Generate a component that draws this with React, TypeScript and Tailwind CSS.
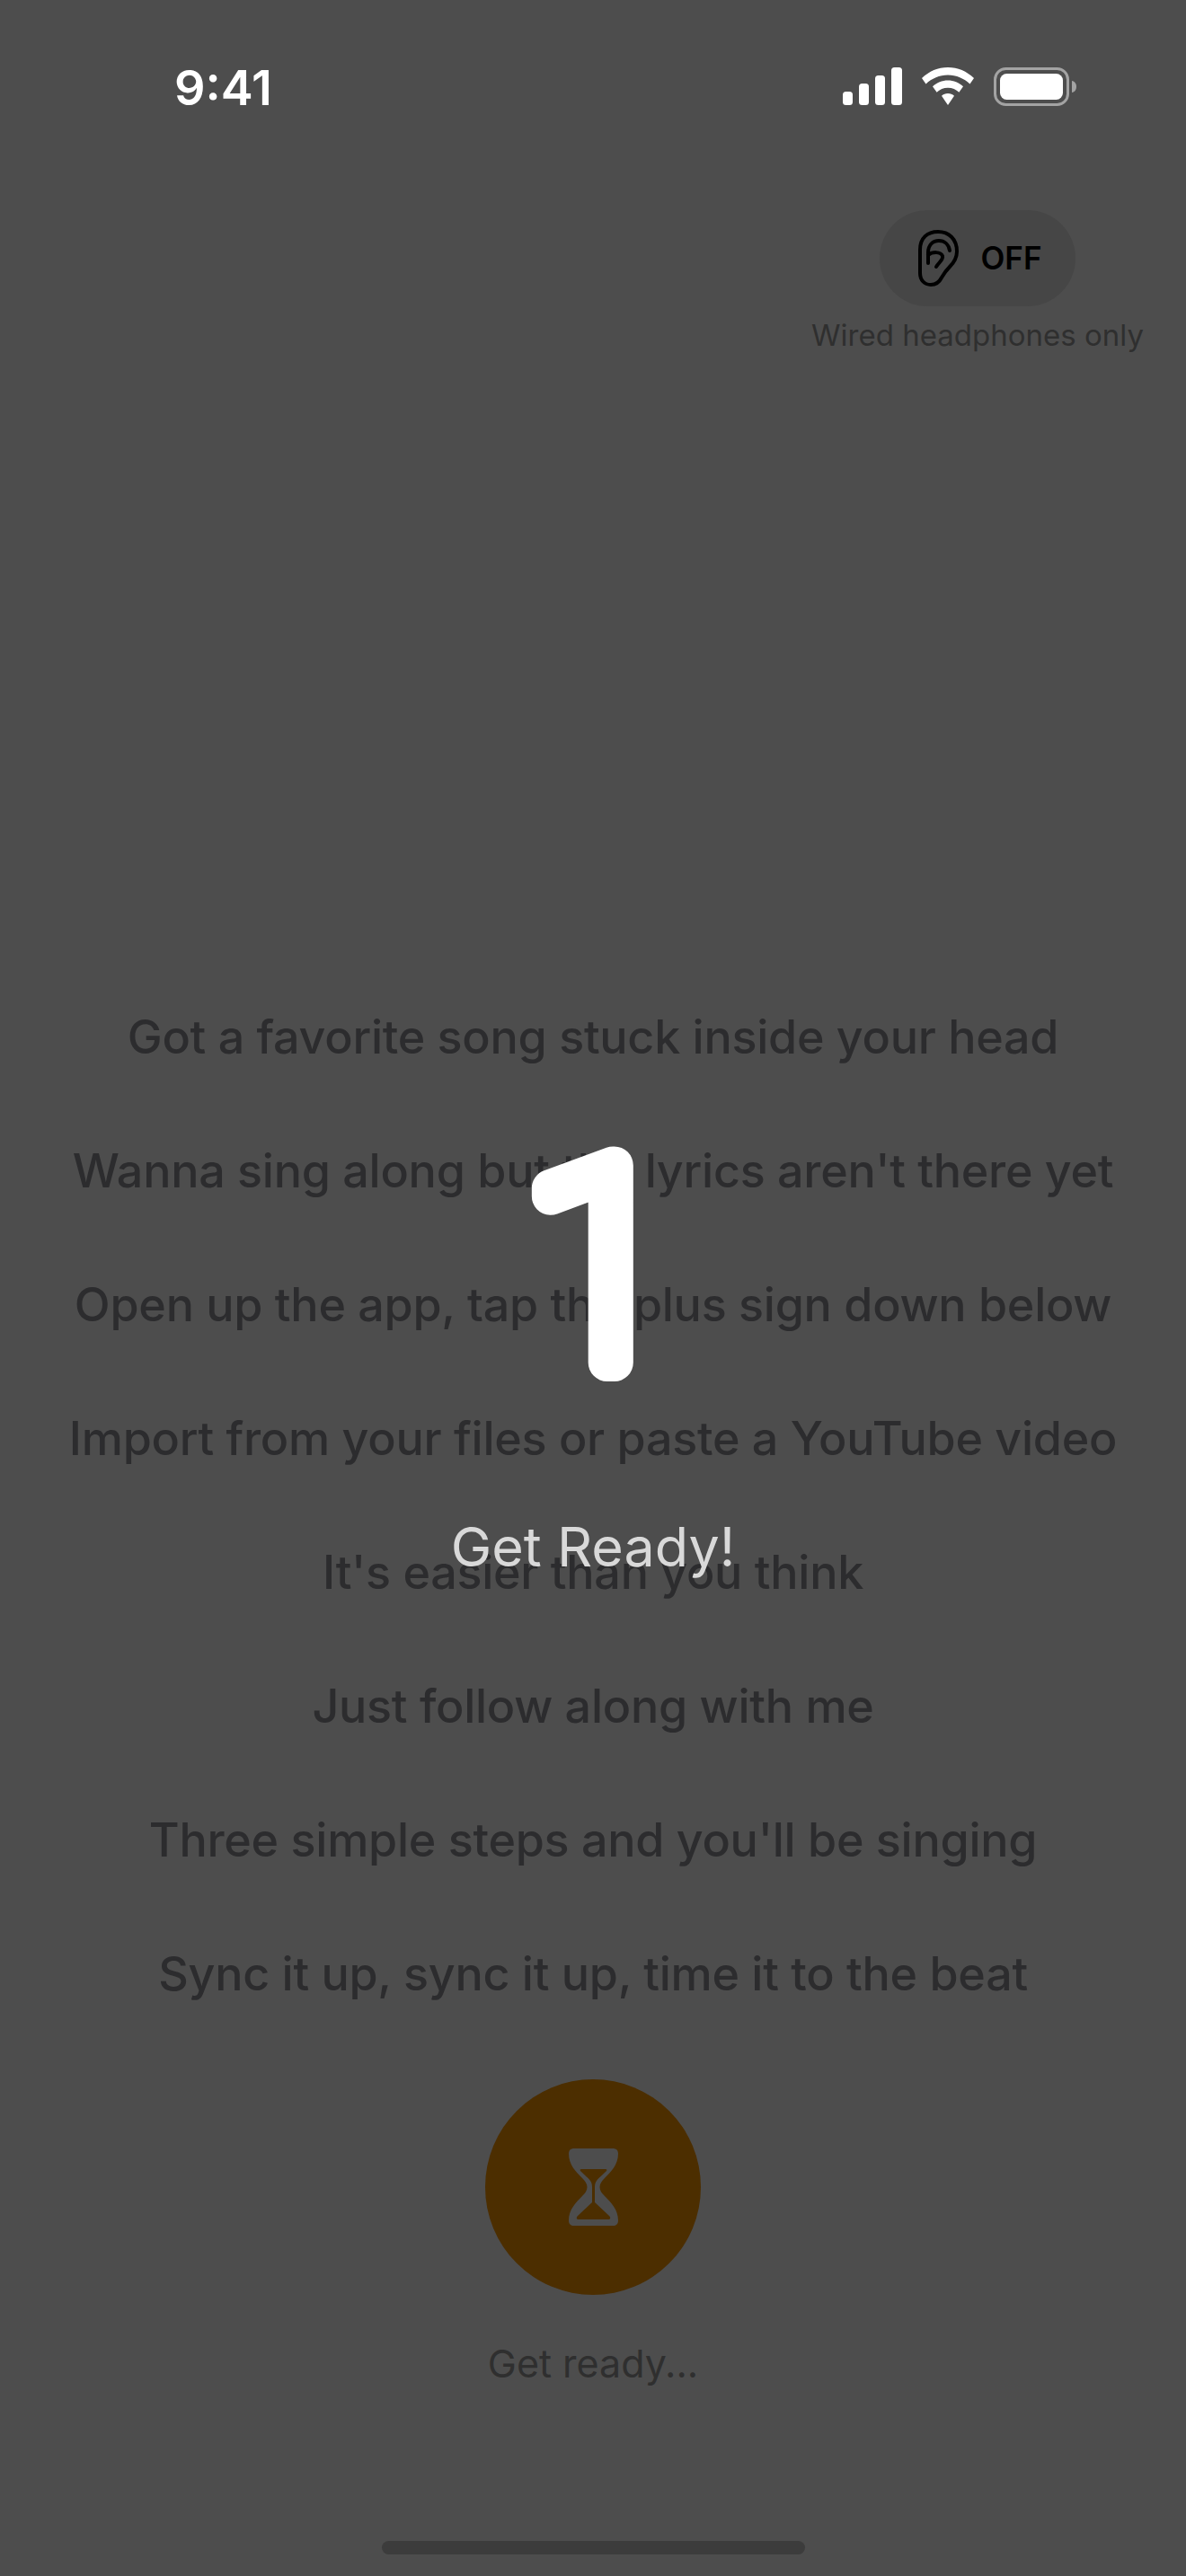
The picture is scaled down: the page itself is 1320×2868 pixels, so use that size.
const lyrics = [
  'Got a favorite song stuck inside your head',
  "Wanna sing along but the lyrics aren't there yet",
  'Open up the app, tap the plus sign down below',
  'Import from your files or paste a YouTube video',
  "It's easier than you think",
  'Just follow along with me',
  "Three simple steps and you'll be singing",
  'Sync it up, sync it up, time it to the beat',
];

const SignalIcon = () => (
  <svg width="66" height="42" viewBox="0 0 66 42" fill="white">
    <rect x="0" y="27" width="11" height="15" rx="3.5" />
    <rect x="18" y="18" width="11" height="24" rx="3.5" />
    <rect x="36" y="9" width="11" height="33" rx="3.5" />
    <rect x="54" y="0" width="12" height="42" rx="3.5" />
  </svg>
);

const WifiIcon = () => (
  <svg width="58" height="42" viewBox="0 0 58 42" fill="white">
    <path d="M29 0C40 0 50 4.300 58 12L53.500 18.500C47 12.400 38.400 8.500 29 8.500C19.600 8.500 11 12.400 4.500 18.500L0 12C8 4.300 18 0 29 0Z" />
    <path d="M29 14.500C35.400 14.500 41.400 17 46 21.200L41.400 27.800C38.200 24.700 33.800 22.800 29 22.800C24.200 22.800 19.800 24.700 16.600 27.800L12 21.200C16.600 17 22.600 14.500 29 14.500Z" />
    <path d="M29 29C31.700 29 34.200 30 36 31.800L29 42L22 31.800C23.800 30 26.300 29 29 29Z" />
  </svg>
);

const BatteryIcon = () => (
  <svg width="92" height="43" viewBox="0 0 92 43" fill="none">
    <rect x="1.500" y="1.500" width="81" height="40" rx="12" stroke="#a3a3a3" strokeWidth="3" />
    <rect x="7" y="7" width="70" height="29" rx="7.500" fill="white" />
    <path d="M87 15C90 15.500 92 18 92 21.500C92 25 90 27.500 87 28Z" fill="#a3a3a3" />
  </svg>
);

const EarIcon = () => (
  <svg width="45" height="63" viewBox="0 0 45 63" fill="none" stroke="black" strokeWidth="4" strokeLinecap="round" strokeLinejoin="round">
    <path d="M2 22C2 9 10 2 22 2C34 2 43 10 43 24C43 32 39 37 35 41C31 45 29 48 26 53C23 59 19 61 14 61C7 61 2 56 2 48Z" />
    <path d="M11 37V25C11 17 16 12 23 12C29 12 34 16 35 23" />
    <path d="M11 28C16 24 25 24 27 29C28 33 24 35 20 41" />
  </svg>
);

const HourglassIcon = () => (
  <svg width="55" height="86" viewBox="0 0 55 86" fill="#4d4d4d" fillRule="evenodd">
    <path d="M6 0H49C53 0 55 2 55 6C55 18 47 26 40 33C37 36 34.500 39 34.500 43C34.500 47 37 50 40 53C47 60 55 68 55 80C55 84 53 86 49 86H6C2 86 0 84 0 80C0 68 8 60 15 53C18 50 20.500 47 20.500 43C20.500 39 18 36 15 33C8 26 0 18 0 6C0 2 2 0 6 0ZM14 23H41C42.500 23 42.800 24 42 25C38 29 33 33 31 36C29.500 38 29 40 29 43V60L45 75C47 77 46.500 79 44 79H11C8.500 79 8 77 10 75L26 60V43C26 40 25.500 38 24 36C22 33 17 29 13 25C12.200 24 12.500 23 14 23Z" />
  </svg>
);

export default function App() {
  return (
    <div className="relative flex h-[2868px] w-[1320px] flex-col overflow-hidden bg-[#4d4d4d] font-['Inter',sans-serif]">
      {/* status bar */}
      <div className="flex h-[234px] items-start justify-between pl-[194px] pr-[122px] pt-[75px]">
        <span className="text-[54px] font-semibold leading-[45px] text-white">9:41</span>
        <div className="flex items-start gap-[22px]">
          <SignalIcon />
          <WifiIcon />
          <BatteryIcon />
        </div>
      </div>

      {/* headphones toggle */}
      <div className="flex flex-col items-end pr-[48px]">
        <div className="flex w-[368px] flex-col items-center">
          <div className="flex h-[107px] w-[218px] items-center justify-center gap-[24px] rounded-full bg-[#464646] pl-[6px]">
            <EarIcon />
            <span className="text-[35px] font-semibold text-black">OFF</span>
          </div>
          <span className="mt-[12px] whitespace-nowrap text-[33px] leading-[40px] text-[#2f2f2f]">Wired headphones only</span>
        </div>
      </div>

      {/* lyrics */}
      <div className="mt-[729px] flex flex-col items-center gap-[83px]">
        {lyrics.map((line) => (
          <p key={line} className="whitespace-nowrap text-[52px] font-medium leading-[66px] tracking-[-0.25px] text-[#2c2c2e]">
            {line}
          </p>
        ))}
      </div>

      {/* record button */}
      <div className="mt-[84px] flex flex-col items-center">
        <div className="flex h-[240px] w-[240px] items-center justify-center rounded-full bg-[#4c2e00]">
          <HourglassIcon />
        </div>
        <span className="mt-[48px] text-[43px] leading-[56px] text-[#2f2f2f]">Get ready...</span>
      </div>

      {/* home indicator */}
      <div className="absolute bottom-[24px] left-[425px] h-[15px] w-[471px] rounded-full bg-[#3c3c3c]" />

      {/* countdown overlay */}
      <div className="absolute left-0 top-[1218px] flex w-full flex-col items-center">
        <svg width="300" height="400" viewBox="0 0 300 400">
          <text
            x="159"
            y="299"
            textAnchor="middle"
            fontFamily="Roboto, sans-serif"
            fontSize="308"
            fontWeight="100"
            fill="white"
            stroke="white"
            strokeWidth="42"
            strokeLinejoin="round"
          >
            1
          </text>
        </svg>
        <span className="mt-[65px] text-[61px] leading-[78px] text-[#d9d9d9]">Get Ready!</span>
      </div>
    </div>
  );
}
